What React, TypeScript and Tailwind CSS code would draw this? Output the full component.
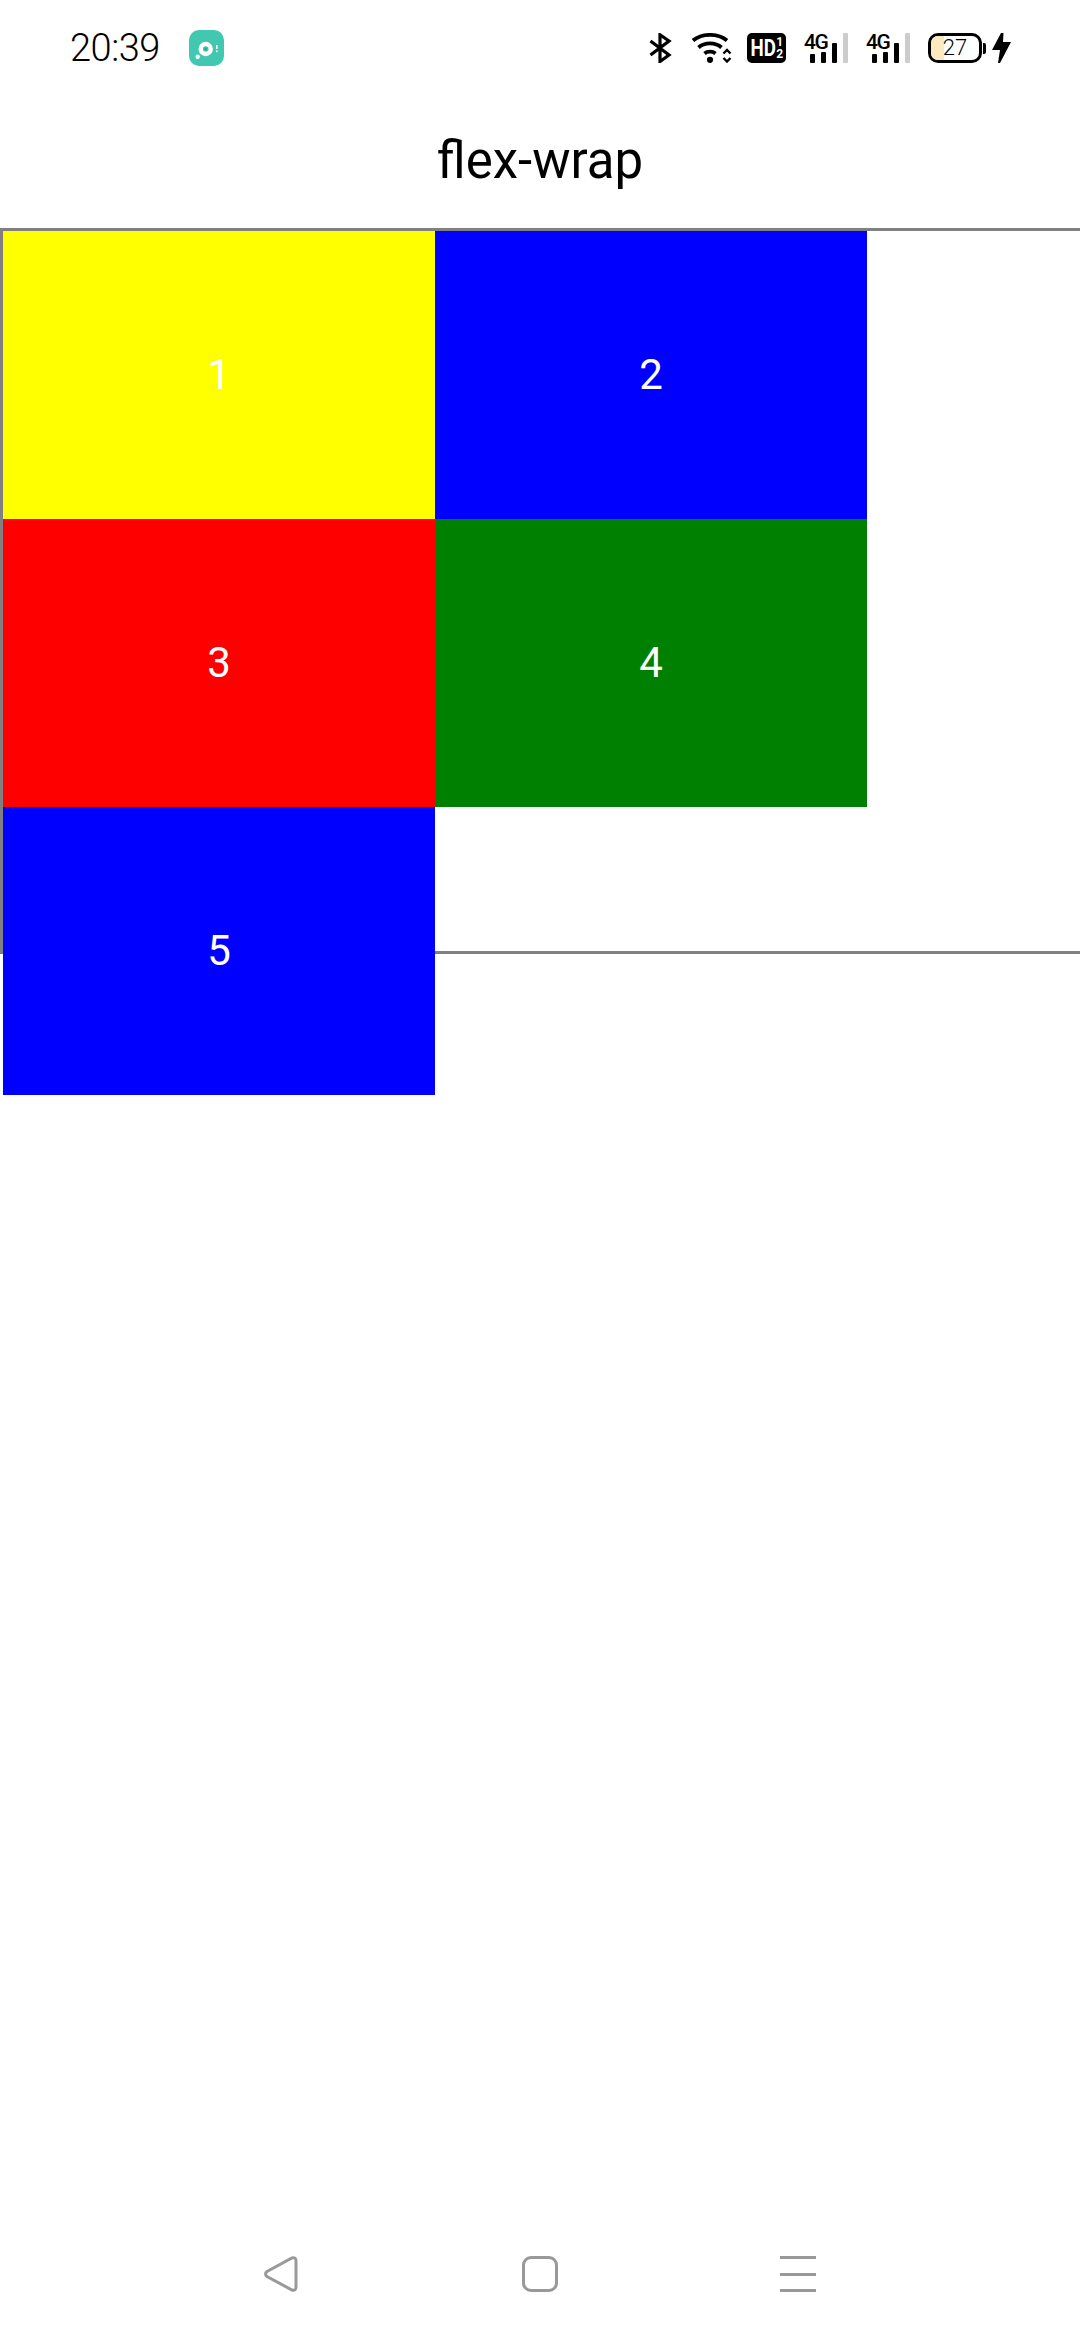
const boxes = [
  { label: '1', color: 'bg-[#ffff00]' },
  { label: '2', color: 'bg-[#0000ff]' },
  { label: '3', color: 'bg-[#ff0000]' },
  { label: '4', color: 'bg-[#008000]' },
  { label: '5', color: 'bg-[#0000ff]' },
];

function AppBadge() {
  return (
    <svg width="35" height="36" viewBox="0 0 35 36">
      <rect x="0" y="0" width="35" height="36" rx="10" fill="#42c8b0" />
      <circle cx="16.7" cy="19" r="5" fill="none" stroke="#fff" strokeWidth="4.4" />
      <circle cx="16.7" cy="19" r="1.4" fill="#2fa892" />
      <circle cx="8.7" cy="26.7" r="2.2" fill="#fff" />
      <rect x="27" y="15" width="1.6" height="4" fill="#fff" />
      <rect x="27" y="20.5" width="1.6" height="1.6" fill="#fff" />
    </svg>
  );
}

function Bluetooth() {
  return (
    <svg width="23" height="30" viewBox="0 0 23 30">
      <path d="M1.5 8 L20 22 L11 28.5 V1.8 L20 8 L1.5 22" fill="none" stroke="#000" strokeWidth="3.2" />
    </svg>
  );
}

function Wifi() {
  return (
    <svg width="40" height="30" viewBox="0 0 40 30">
      <path d="M1 7.5 C10 0 26 0 35 7.5" fill="none" stroke="#000" strokeWidth="3.8" />
      <path d="M6.5 14.5 C12.5 9 23.5 9 29.5 14.5" fill="none" stroke="#000" strokeWidth="3.8" />
      <path d="M12.5 20.5 C15.5 18 20.5 18 23.5 20.5" fill="none" stroke="#000" strokeWidth="3.8" />
      <circle cx="18" cy="26.8" r="3.1" fill="#000" />
      <path d="M31.5 20.5 L35 17 L38.5 20.5" fill="none" stroke="#000" strokeWidth="2.4" />
      <path d="M31.5 25 L35 28.5 L38.5 25" fill="none" stroke="#000" strokeWidth="2.4" />
    </svg>
  );
}

function HdBadge() {
  return (
    <div className="flex h-[30px] w-[39px] items-center justify-center rounded-[5px] bg-black font-['Roboto',sans-serif] font-bold leading-none text-white">
      <span className="mr-[-3px] ml-[-3px] scale-x-[0.78] text-[24px]">HD</span>
      <span className="flex flex-col items-center text-[12px] leading-[12px]">
        <span>1</span>
        <span>2</span>
      </span>
    </div>
  );
}

function Signal() {
  return (
    <div className="relative h-[30px] w-[44px]">
      <span className="absolute left-0 top-[-3px] font-['Roboto',sans-serif] text-[21px] font-medium leading-[24px] tracking-[-1.5px] text-black">
        4G
      </span>
      <div className="absolute bottom-0 left-[6px] flex items-end gap-[6px]">
        <div className="h-[9px] w-[5px] rounded-[1px] bg-black" />
        <div className="h-[11px] w-[5px] rounded-[1px] bg-black" />
        <div className="h-[20px] w-[5px] rounded-[1px] bg-black" />
        <div className="h-[30px] w-[5px] rounded-[1px] bg-[#cccccc]" />
      </div>
    </div>
  );
}

function Battery() {
  return (
    <div className="flex items-center gap-[1px]">
      <div className="relative h-[30px] w-[54px] overflow-hidden rounded-[10px] border-[3px] border-black">
        <div className="absolute inset-y-0 left-0 w-[13px] bg-[#fbeac0]" />
        <span className="absolute inset-0 flex items-center justify-center font-['Roboto',sans-serif] text-[22px] font-light leading-none text-black">
          27
        </span>
      </div>
      <div className="h-[11px] w-[3px] rounded-r-[2px] bg-black" />
    </div>
  );
}

function Bolt() {
  return (
    <svg width="19" height="30" viewBox="0 0 19 30">
      <path d="M9 0 L0 17 H8 L6 30 H8 L19 9 H11 L11.5 0 Z" fill="#000" />
    </svg>
  );
}

function BackIcon() {
  return (
    <svg width="35" height="36" viewBox="0 0 35 36">
      <path
        d="M3 15.5 L28 2 Q32 0.8 32 5 V31 Q32 35.2 28 34 L3 20.5 Q0 18 3 15.5 Z"
        fill="none"
        stroke="#999999"
        strokeWidth="3"
      />
    </svg>
  );
}

export default function App() {
  return (
    <div className="flex h-[2340px] w-[1080px] flex-col overflow-hidden bg-white font-['Roboto',sans-serif]">
      {/* Status bar */}
      <div className="flex h-[96px] items-center justify-between pl-[70px] pr-[69px]">
        <div className="flex items-center gap-[29px]">
          <span className="font-['Roboto',sans-serif] text-[38px] font-light leading-none tracking-[-0.5px] text-black">20:39</span>
          <AppBadge />
        </div>
        <div className="flex items-center">
          <Bluetooth />
          <div className="ml-[20px]"><Wifi /></div>
          <div className="ml-[15px]"><HdBadge /></div>
          <div className="ml-[18px]"><Signal /></div>
          <div className="ml-[18px]"><Signal /></div>
          <div className="ml-[18px]"><Battery /></div>
          <div className="ml-[6px]"><Bolt /></div>
        </div>
      </div>

      {/* Title */}
      <div className="flex h-[132px] items-center justify-center pb-[4px]">
        <h1 className="text-[51px] font-normal leading-none text-black">flex-wrap</h1>
      </div>

      {/* Wrap container, the fifth box runs out under the bottom border */}
      <div className="flex h-[726px] w-[1083px] shrink-0 flex-wrap content-start border-[3px] border-[#808080]">
        {boxes.map((box) => (
          <div
            key={box.label}
            className={`flex h-[288px] w-[432px] items-center justify-center pb-[2px] text-[42px] text-white ${box.color}`}
          >
            {box.label}
          </div>
        ))}
      </div>

      <div className="flex-1" />

      {/* Navigation bar */}
      <div className="mb-[48px] flex h-[36px] items-center justify-center">
        <BackIcon />
        <div className="ml-[223px] h-[36px] w-[36px] rounded-[9px] border-[3px] border-[#999999]" />
        <div className="ml-[222px] flex h-[36px] w-[36px] flex-col justify-between">
          <div className="h-[3px] bg-[#999999]" />
          <div className="h-[3px] bg-[#999999]" />
          <div className="h-[3px] bg-[#999999]" />
        </div>
      </div>
    </div>
  );
}
